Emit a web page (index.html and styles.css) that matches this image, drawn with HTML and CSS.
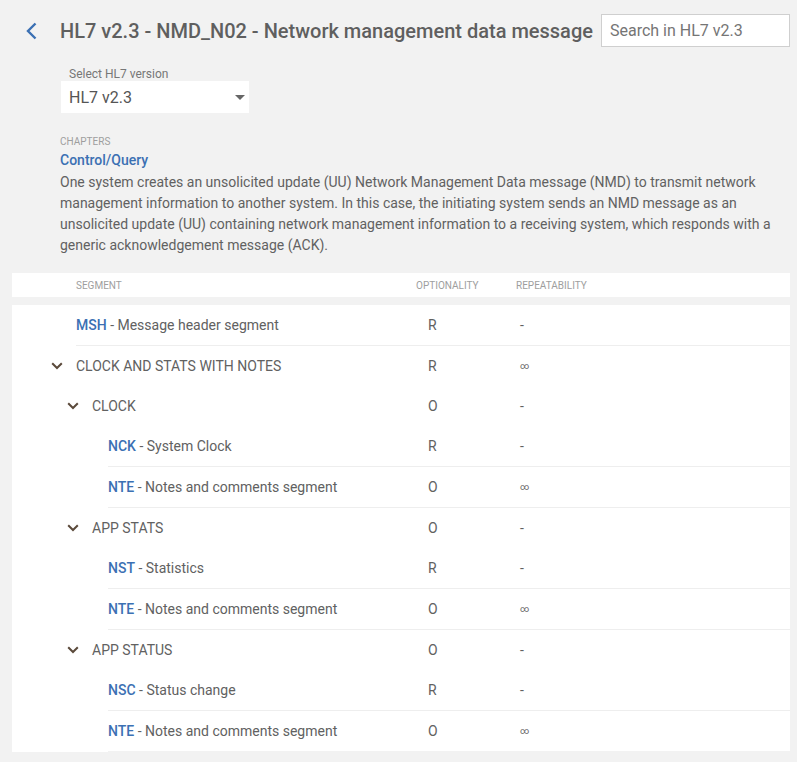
FILE: index.html
```html
<!DOCTYPE html>
<html>
<head>
<meta charset="utf-8">
<link rel="stylesheet" href="styles.css">
</head>
<body>
<div class="topbar">
  <svg class="back" width="12" height="18" viewBox="0 0 12 18"><path d="M10.5 1.5 L3 9 L10.5 16.5" fill="none" stroke="#3b70b3" stroke-width="2.4"/></svg>
  <h1 class="title">HL7 v2.3 - NMD_N02 - Network management data message</h1>
  <div class="search">Search in HL7 v2.3</div>
</div>

<div class="intro">
  <div class="select-label">Select HL7 version</div>
  <div class="select">
    <span>HL7 v2.3</span>
    <span class="caret"></span>
  </div>
  <div class="chapters">Chapters</div>
  <div class="chapter-link">Control/Query</div>
  <p class="desc">One system creates an unsolicited update (UU) Network Management Data message (NMD) to transmit network management information to another system. In this case, the initiating system sends an NMD message as an unsolicited update (UU) containing network management information to a receiving system, which responds with a generic acknowledgement message (ACK).</p>
</div>

<div class="thead">
  <div class="th seg">Segment</div>
  <div class="th opt">Optionality</div>
  <div class="th rep">Repeatability</div>
</div>

<div class="tbody">
  <div class="row leaf d0"><div class="seg"><span class="code">MSH</span> - Message header segment</div><div class="opt">R</div><div class="rep">-</div></div>
  <div class="row group d0"><div class="seg"><svg class="chev" width="12" height="8" viewBox="0 0 12 8"><path d="M1.2 1.2 L6 6 L10.8 1.2" fill="none" stroke="#5b4a3b" stroke-width="2"/></svg>CLOCK AND STATS WITH NOTES</div><div class="opt">R</div><div class="rep"><span class="inf">∞</span></div></div>
  <div class="row group d1"><div class="seg"><svg class="chev" width="12" height="8" viewBox="0 0 12 8"><path d="M1.2 1.2 L6 6 L10.8 1.2" fill="none" stroke="#5b4a3b" stroke-width="2"/></svg>CLOCK</div><div class="opt">O</div><div class="rep">-</div></div>
  <div class="row leaf d2"><div class="seg"><span class="code">NCK</span> - System Clock</div><div class="opt">R</div><div class="rep">-</div></div>
  <div class="row leaf d2"><div class="seg"><span class="code">NTE</span> - Notes and comments segment</div><div class="opt">O</div><div class="rep"><span class="inf">∞</span></div></div>
  <div class="row group d1"><div class="seg"><svg class="chev" width="12" height="8" viewBox="0 0 12 8"><path d="M1.2 1.2 L6 6 L10.8 1.2" fill="none" stroke="#5b4a3b" stroke-width="2"/></svg>APP STATS</div><div class="opt">O</div><div class="rep">-</div></div>
  <div class="row leaf d2"><div class="seg"><span class="code">NST</span> - Statistics</div><div class="opt">R</div><div class="rep">-</div></div>
  <div class="row leaf d2"><div class="seg"><span class="code">NTE</span> - Notes and comments segment</div><div class="opt">O</div><div class="rep"><span class="inf">∞</span></div></div>
  <div class="row group d1"><div class="seg"><svg class="chev" width="12" height="8" viewBox="0 0 12 8"><path d="M1.2 1.2 L6 6 L10.8 1.2" fill="none" stroke="#5b4a3b" stroke-width="2"/></svg>APP STATUS</div><div class="opt">O</div><div class="rep">-</div></div>
  <div class="row leaf d2"><div class="seg"><span class="code">NSC</span> - Status change</div><div class="opt">R</div><div class="rep">-</div></div>
  <div class="row leaf d2 last"><div class="seg"><span class="code">NTE</span> - Notes and comments segment</div><div class="opt">O</div><div class="rep"><span class="inf">∞</span></div></div>
</div>
</body>
</html>
```

FILE: styles.css
```css
* { box-sizing: border-box; }
html, body { margin: 0; padding: 0; }
body {
  background: #f2f2f2;
  font-family: Roboto, "Liberation Sans", sans-serif;
  color: #616161;
  padding-top: 14px;
}
.topbar {
  display: flex;
  align-items: center;
  height: 33px;
  padding-left: 25px;
}
.back { display: block; margin-right: 23px; }
.title {
  margin: 0;
  font-size: 20px;
  font-weight: 500;
  color: #5f5f5f;
  white-space: nowrap;
}
.search {
  margin-left: 8px;
  width: 189px;
  height: 33px;
  background: #fff;
  border: 1px solid #cfcfcf;
  padding-left: 8px;
  font-size: 16px;
  line-height: 31px;
  color: #757575;
}
.intro {
  padding-left: 60px;
  padding-right: 7px;
  padding-top: 20px;
}
.select-label {
  margin-left: 9px;
  font-size: 12px;
  line-height: 14px;
  color: #777;
}
.select {
  margin-left: 1px;
  width: 188px;
  height: 32px;
  background: #fff;
  display: flex;
  align-items: center;
  justify-content: space-between;
  padding: 0 4px 0 8px;
  font-size: 16px;
  color: #555;
}
.caret {
  width: 0; height: 0;
  border-left: 5px solid transparent;
  border-right: 5px solid transparent;
  border-top: 5px solid #666;
}
.chapters {
  margin-top: 23px;
  font-size: 10px;
  line-height: 12px;
  text-transform: uppercase;
  color: #9e9e9e;
}
.chapter-link {
  margin-top: 2px;
  font-size: 14px;
  font-weight: 500;
  line-height: 20px;
  color: #3b70b3;
}
.desc {
  margin: 2px 0 0;
  font-size: 14px;
  line-height: 21px;
  color: #616161;
}
.thead {
  margin: 17px 7px 0 12px;
  height: 24px;
  background: #fff;
  display: grid;
  grid-template-columns: 404px 100px 1fr;
  align-items: center;
}
.th {
  font-size: 10px;
  text-transform: uppercase;
  color: #9e9e9e;
}
.th.seg { padding-left: 64px; }
.tbody {
  margin: 8px 7px 0 12px;
  background: #fff;
}
.row {
  display: grid;
  align-items: center;
  height: 40px;
  font-size: 14px;
}
.row.leaf { height: 41px; border-bottom: 1px solid #eeeeee; }
.row.last { border-bottom-color: #f2f2f2; }
.row.d0 { margin-left: 64px; grid-template-columns: 340px 100px 1fr; }
.row.d1 { margin-left: 80px; grid-template-columns: 324px 100px 1fr; }
.row.d2 { margin-left: 96px; grid-template-columns: 308px 100px 1fr; }
.seg { display: flex; align-items: center; white-space: pre; }
.chev { display: block; margin-left: -25px; margin-right: 13px; }
.code { color: #3b70b3; font-weight: 500; }
.row .opt { padding-left: 12px; }
.row .rep { padding-left: 4px; }
.inf {
  display: inline-block;
  font-size: 9px;
  line-height: 1;
  vertical-align: 2px;
  color: #666;
}
```
